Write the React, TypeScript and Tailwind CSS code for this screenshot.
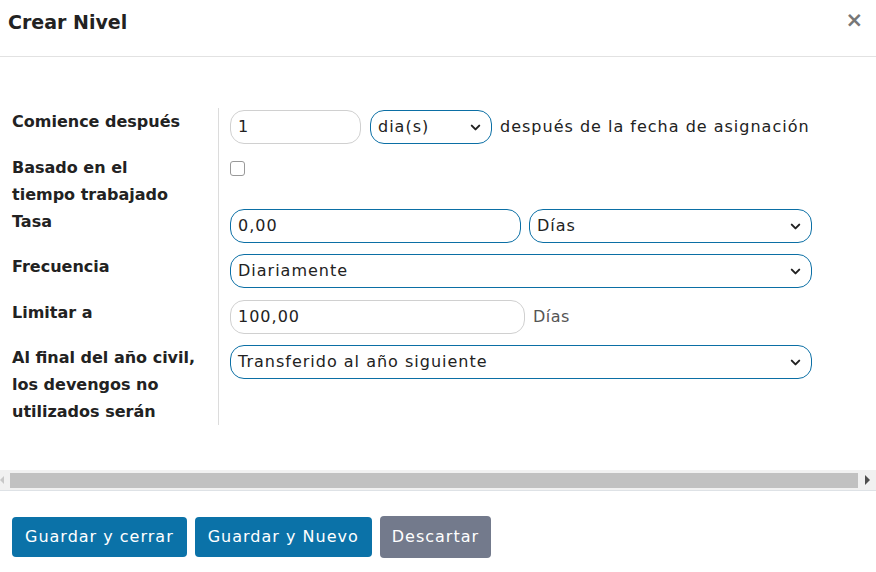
import { ChevronDown } from 'lucide-react';

const font = { fontFamily: '"DejaVu Sans", "Noto Sans", sans-serif' };

function Select({ value, className }: { value: string; className?: string }) {
    return (
        <div className={`h-[34px] flex items-center justify-between rounded-[14px] border border-[#0b6fa5] bg-white pl-[7px] pr-[8px] text-[16px] tracking-[1px] text-[#222] ${className ?? ''}`}>
            <span>{value}</span>
            <ChevronDown size={15} strokeWidth={3.2} className="text-[#222]" />
        </div>
    );
}

function Input({ value, blue, className }: { value: string; blue?: boolean; className?: string }) {
    return (
        <div className={`h-[34px] flex items-center rounded-[14px] border bg-white px-[7px] text-[16px] tracking-[1px] text-[#222] ${blue ? 'border-[#0b6fa5]' : 'border-[#d0d0d0]'} ${className ?? ''}`}>
            {value}
        </div>
    );
}

function Label({ children }: { children: React.ReactNode }) {
    return (
        <div className="pl-3 pr-2 border-r border-[#dcdcdc] text-[16px] leading-[27px] font-bold text-[#222]">
            {children}
        </div>
    );
}

export default function App() {
    return (
        <div className="w-[876px] h-[572px] bg-white flex flex-col overflow-hidden" style={font}>
            {/* header */}
            <div className="h-[57px] shrink-0 border-b border-[#e2e2e2] flex justify-between pl-2 pr-[13px] pt-[8px]">
                <div className="text-[19px] leading-[28px] font-bold text-[#222]">Crear Nivel</div>
                <div className="text-[21px] leading-[24px] font-bold text-[#777]">×</div>
            </div>

            {/* body */}
            <div className="flex-1 pt-[51px]">
                <div className="grid grid-cols-[219px_1fr]">
                    <Label>Comience después</Label>
                    <div className="pl-[11px] pt-[2px] pb-[10px] flex items-center gap-[8px]">
                        <Input value="1" className="w-[131px]" />
                        <Select value="dia(s)" className="w-[122px] ml-[1px]" />
                        <span className="text-[16px] tracking-[1px] text-[#222] whitespace-nowrap">después de la fecha de asignación</span>
                    </div>

                    <Label>Basado en el<br />tiempo trabajado</Label>
                    <div className="pl-[11px] pt-[7px]">
                        <div className="w-[15px] h-[15px] rounded-[3px] border border-[#999] bg-white" />
                    </div>

                    <Label>Tasa</Label>
                    <div className="pl-[11px] pt-[1px] pb-[10px] flex gap-[8px] w-[593px]">
                        <Input value="0,00" blue className="flex-1" />
                        <Select value="Días" className="w-[283px]" />
                    </div>

                    <Label>Frecuencia</Label>
                    <div className="pl-[11px] pt-[1px] pb-[11px] w-[593px]">
                        <Select value="Diariamente" />
                    </div>

                    <Label>Limitar a</Label>
                    <div className="pl-[11px] pt-[1px] pb-[10px] flex items-center gap-[8px]">
                        <Input value="100,00" className="w-[295px]" />
                        <span className="text-[16px] tracking-[0.5px] text-[#555]">Días</span>
                    </div>

                    <Label>Al final del año civil,<br />los devengos no<br />utilizados serán</Label>
                    <div className="pl-[11px] pt-[1px] w-[593px]">
                        <Select value="Transferido al año siguiente" />
                    </div>
                </div>
            </div>

            {/* horizontal scrollbar */}
            <div className="h-[20px] shrink-0 bg-[#f1f1f1] flex items-center">
                <div className="w-[10px] flex justify-start">
                    <div className="w-0 h-0 border-y-[4px] border-y-transparent border-r-[4px] border-r-[#c8c8c8]" />
                </div>
                <div className="flex-1 h-[15px] bg-[#c1c1c1]" />
                <div className="w-[18px] flex justify-center">
                    <div className="w-0 h-0 border-y-[5px] border-y-transparent border-l-[5px] border-l-[#505050]" />
                </div>
            </div>

            {/* footer */}
            <div className="h-[82px] shrink-0 border-t border-[#dee2e6] flex items-start gap-[8px] pl-3 pt-[26px]">
                <button className="h-[40px] px-[13px] rounded-[4px] bg-[#0b72a8] text-white text-[16px] tracking-[1px]">Guardar y cerrar</button>
                <button className="h-[40px] px-[13px] rounded-[4px] bg-[#0b72a8] text-white text-[16px] tracking-[1px]">Guardar y Nuevo</button>
                <button className="h-[42px] -mt-[1px] px-[12px] rounded-[4px] bg-[#737a8c] text-white text-[16px] tracking-[1px]">Descartar</button>
            </div>
        </div>
    );
}
